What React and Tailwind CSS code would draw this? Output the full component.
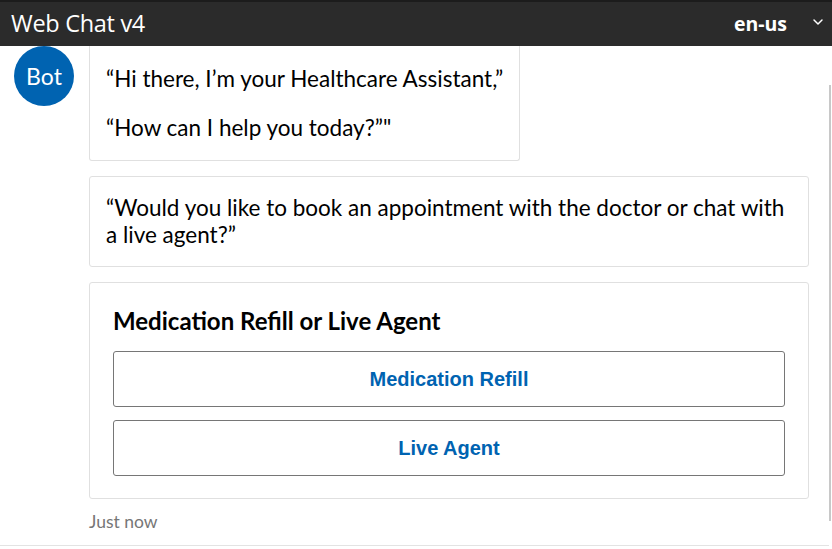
import { ChevronDown } from "lucide-react";

const bodyFont = { fontFamily: "Lato, 'Open Sans', sans-serif" };

function Bubble({ children, className = "" }) {
  return (
    <div className={`border border-[#e0e0e0] rounded-[3px] bg-white ${className}`}>
      {children}
    </div>
  );
}

function CardButton({ label }) {
  return (
    <button className="h-[56px] w-full rounded-[3px] border border-[#767676] bg-white text-[20px] font-bold text-[#0063b1] font-['Liberation_Sans',Arial,sans-serif]">
      {label}
    </button>
  );
}

export default function App() {
  return (
    <div className="w-[832px] h-[549px] bg-white flex flex-col overflow-hidden" style={bodyFont}>
      <header className="h-[46px] shrink-0 bg-[#2b2b2b] border-t-2 border-[#1c1c1c] flex items-center justify-between pl-[11px] pr-[6px]">
        <h1 className="text-[23.5px] text-white font-['Open_Sans',sans-serif] tracking-[-0.3px]">Web Chat v4</h1>
        <div className="flex items-center gap-[23px]">
          <span className="text-[19.5px] font-bold text-white font-['Open_Sans',sans-serif]">en-us</span>
          <ChevronDown size={16} strokeWidth={2.2} className="text-white mb-[4px]" />
        </div>
      </header>

      <main className="flex-1 relative">
        <div className="flex pl-[14px] pr-[23px]">
          <div className="w-[60px] h-[60px] shrink-0 rounded-full bg-[#0063b1] flex items-center justify-center text-white text-[23px]">
            Bot
          </div>
          <div className="ml-[15px] flex-1 flex flex-col">
            <Bubble className="w-fit border-t-0 rounded-t-none px-4 pt-[19px] pb-[19px] text-[22.5px] text-black leading-[27px]">
              <p>“Hi there, I’m your Healthcare Assistant,”</p>
              <p className="mt-[22px]">“How can I help you today?”"</p>
            </Bubble>

            <Bubble className="mt-[15px] px-4 pt-[17px] pb-[18px] text-[22.5px] leading-[27px] text-black">
              <p>“Would you like to book an appointment with the doctor or chat with a live agent?”</p>
            </Bubble>

            <Bubble className="mt-[15px] px-[23px] pt-[24px] pb-[22px]">
              <h2 className="text-[24px] font-bold text-black leading-[28px]">Medication Refill or Live Agent</h2>
              <div className="mt-[16px] flex flex-col gap-[13px]">
                <CardButton label="Medication Refill" />
                <CardButton label="Live Agent" />
              </div>
            </Bubble>

            <p className="mt-[10px] text-[17.5px] text-[#767676]">Just now</p>
          </div>
        </div>

        <div className="absolute right-[1px] top-[39px] h-[436px] w-[2px] bg-[#c8c8c8]" />
        <div className="absolute left-0 bottom-[3px] w-[829px] h-px bg-[#e3e3e3]" />
      </main>
    </div>
  );
}
